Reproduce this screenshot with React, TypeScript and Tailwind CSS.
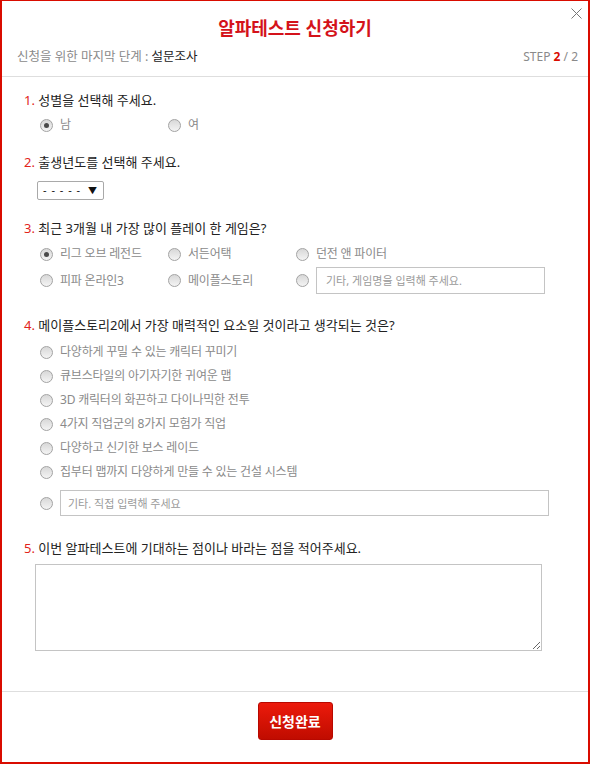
import React from "react";

const gender = ["남", "여"];
const games = ["리그 오브 레전드", "서든어택", "던전 앤 파이터", "피파 온라인3", "메이플스토리"];
const charms = [
  "다양하게 꾸밀 수 있는 캐릭터 꾸미기",
  "큐브스타일의 아기자기한 귀여운 맵",
  "3D 캐릭터의 화끈하고 다이나믹한 전투",
  "4가지 직업군의 8가지 모험가 직업",
  "다양하고 신기한 보스 레이드",
  "집부터 맵까지 다양하게 만들 수 있는 건설 시스템",
];

function Radio({ checked = false }: { checked?: boolean }) {
  return (
    <span className="relative flex h-[13px] w-[13px] shrink-0 items-center justify-center rounded-full border border-[#a3a3a3] bg-gradient-to-b from-[#d8d8d8] to-[#f4f4f4]">
      {checked && <span className="h-[5px] w-[5px] rounded-full bg-[#4a4a4a]" />}
    </span>
  );
}

function Option({ label, checked, width }: { label: string; checked?: boolean; width?: string }) {
  return (
    <label className={`flex items-center gap-[7px] ${width ?? ""}`}>
      <Radio checked={checked} />
      <span className="text-[12px] tracking-[-0.2px] text-[#8a8a8a]">{label}</span>
    </label>
  );
}

function Question({ no, text, className }: { no: number; text: string; className?: string }) {
  return (
    <p className={`text-[13px] leading-[18px] text-[#222] ${className ?? ""}`}>
      <span className="text-[#e2231a]">{no}.</span> {text}
    </p>
  );
}

export default function App() {
  return (
    <div className="flex h-[764px] w-[590px] flex-col border-2 border-t border-[#d90c00] bg-white font-['Noto_Sans','Noto_Sans_CJK_KR',sans-serif]">
      <header className="relative box-content h-[75px] border-b border-[#dedede]">
        <button className="absolute right-[5px] top-[5px] flex h-[14px] w-[14px] items-center justify-center">
          <svg width="11" height="11" viewBox="0 0 11 11" stroke="#777" strokeWidth="1">
            <path d="M0.5 0.5 L10.5 10.5 M10.5 0.5 L0.5 10.5" />
          </svg>
        </button>
        <h1 className="pt-[16px] text-center text-[18px] font-bold leading-[22px] text-[#d4121a]">알파테스트 신청하기</h1>
        <div className="mt-[9px] flex items-center justify-between pl-[15px] pr-[10px] leading-[18px]">
          <p className="text-[12.5px] text-[#8a8a8a]">
            신청을 위한 마지막 단계 : <span className="text-[#222]">설문조사</span>
          </p>
          <p className="text-[12px] text-[#8a8a8a]">
            STEP <span className="font-bold text-[#d90c00]">2</span> / 2
          </p>
        </div>
      </header>

      <main className="flex-1 pl-[22px]">
        <Question no={1} text="성별을 선택해 주세요." className="pt-[14px]" />
        <div className="ml-[16px] mt-[4px] flex h-[24px] items-center">
          {gender.map((g, i) => (
            <Option key={g} label={g} checked={i === 0} width="w-[128px]" />
          ))}
        </div>

        <Question no={2} text="출생년도를 선택해 주세요." className="mt-[16px]" />
        <div className="ml-[13px] mt-[10px] flex h-[19px] w-[67px] items-center justify-between rounded-[2px] border border-[#a9a9a9] pl-[5px] pr-[6px] text-[11px] text-[#111]">
          <span className="tracking-[1px]">- - - - -</span>
          <span className="text-[9px]">▼</span>
        </div>

        <Question no={3} text="최근 3개월 내 가장 많이 플레이 한 게임은?" className="mt-[19px]" />
        <div className="ml-[16px] mt-[4px]">
          <div className="flex h-[26px] items-center">
            {games.slice(0, 3).map((g, i) => (
              <Option key={g} label={g} checked={i === 0} width="w-[128px]" />
            ))}
          </div>
          <div className="flex h-[27px] items-center">
            {games.slice(3).map((g) => (
              <Option key={g} label={g} width="w-[128px]" />
            ))}
            <div className="flex items-center gap-[7px]">
              <Radio />
              <input
                placeholder="기타, 게임명을 입력해 주세요."
                className="h-[27px] w-[229px] border border-[#c4c4c4] px-[9px] text-[11px] outline-none placeholder:text-[#9a9a9a]"
              />
            </div>
          </div>
        </div>

        <Question no={4} text="메이플스토리2에서 가장 매력적인 요소일 것이라고 생각되는 것은?" className="mt-[22px]" />
        <div className="ml-[16px] mt-[6px]">
          {charms.map((c) => (
            <div key={c} className="flex h-[24px] items-center">
              <Option label={c} />
            </div>
          ))}
          <div className="mt-[6px] flex h-[26px] items-center gap-[7px]">
            <Radio />
            <input
              placeholder="기타. 직접 입력해 주세요"
              className="h-[26px] w-[489px] border border-[#c4c4c4] px-[7px] text-[11px] outline-none placeholder:text-[#9a9a9a]"
            />
          </div>
        </div>

        <Question no={5} text="이번 알파테스트에 기대하는 점이나 바라는 점을 적어주세요." className="mt-[23px]" />
        <textarea className="ml-[11px] mt-[7px] block h-[87px] w-[507px] border border-[#c4c4c4] outline-none" />
      </main>

      <footer className="box-content flex h-[70px] justify-center border-t border-[#dedede]">
        <button className="mt-[10px] h-[38px] w-[75px] rounded-[3px] border border-[#b80800] bg-gradient-to-b from-[#ec1a0c] to-[#c00c00] text-[14px] font-bold text-white">
          신청완료
        </button>
      </footer>
    </div>
  );
}
